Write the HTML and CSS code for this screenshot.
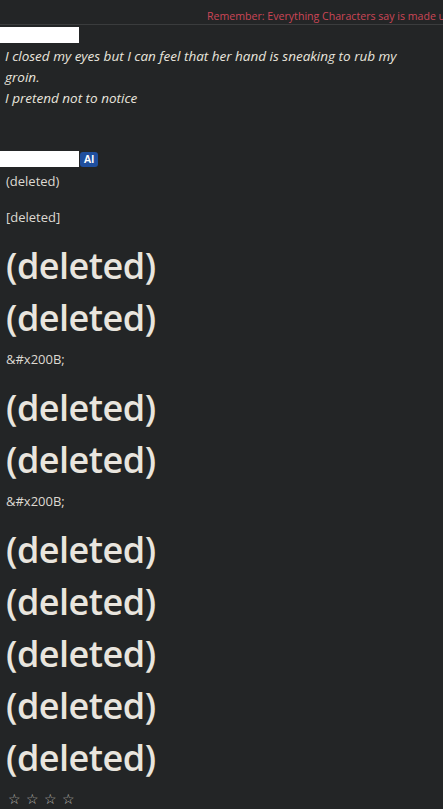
FILE: index.html
```html
<!DOCTYPE html>
<html>
<head>
<meta charset="utf-8">
<link rel="stylesheet" href="styles.css">
</head>
<body>
<div class="page">
  <header class="topbar">
    <div class="title">Play as my_companion</div>
    <div class="notice">Remember: Everything Characters say is made up!</div>
  </header>
  <div class="msg">
    <div class="name-row"><span class="name-box"></span></div>
    <div class="user-text">
      <p>I closed my eyes but I can feel that her hand is sneaking to rub my groin.</p>
      <p>I pretend not to notice</p>
    </div>
  </div>
  <div class="msg ai">
    <div class="name-row"><span class="name-box"></span><span class="badge">AI</span></div>
    <p class="small first">(deleted)</p>
    <p class="small">[deleted]</p>
    <h1 class="big">(deleted)</h1>
    <h1 class="big">(deleted)</h1>
    <p class="small zw">&amp;#x200B;</p>
    <h1 class="big">(deleted)</h1>
    <h1 class="big">(deleted)</h1>
    <p class="small zw">&amp;#x200B;</p>
    <h1 class="big">(deleted)</h1>
    <h1 class="big">(deleted)</h1>
    <h1 class="big">(deleted)</h1>
    <h1 class="big">(deleted)</h1>
    <h1 class="big">(deleted)</h1>
    <div class="stars">☆ ☆ ☆ ☆</div>
  </div>
</div>
</body>
</html>
```
FILE: styles.css
```css
html, body {
  margin: 0;
  padding: 0;
  background: #232526;
}
body {
  font-family: "Open Sans", "Noto Sans", sans-serif;
  color: #e9e5de;
  width: 443px;
  height: 809px;
  overflow: hidden;
}
.page {
  display: flex;
  flex-direction: column;
}
.topbar {
  height: 24px;
  border-bottom: 1px solid #3a3c3d;
  overflow: hidden;
  display: flex;
  flex-direction: column;
}
.title {
  margin-top: -19px;
  margin-left: 8px;
  height: 18px;
  font-size: 15px;
  line-height: 18px;
  color: #9a9a9a;
  white-space: nowrap;
}
.notice {
  padding-left: 207px;
  font-size: 10.6px;
  line-height: 14px;
  color: #cc4657;
  white-space: nowrap;
  margin-top: 10px;
}
.msg {
  display: flex;
  flex-direction: column;
}
.name-row {
  display: flex;
  align-items: center;
  gap: 1px;
  margin-top: 2px;
}
.name-box {
  width: 79px;
  height: 16px;
  background: #ffffff;
}
.badge {
  width: 18px;
  height: 15px;
  background: #1f4f9e;
  border-radius: 3px;
  color: #ffffff;
  font-family: "Liberation Sans", Arial, sans-serif;
  font-weight: 700;
  font-size: 10.5px;
  line-height: 15px;
  text-align: center;
}
.user-text {
  padding: 3px 20px 0 5px;
  font-style: italic;
  font-size: 13.5px;
  line-height: 21px;
}
.user-text p {
  margin: 0;
}
.ai {
  margin-top: 40px;
}
.small {
  margin: 0;
  padding-left: 6px;
  font-size: 13px;
  line-height: 18px;
  color: #ddd9d2;
}
.small.first {
  margin-top: 5px;
  margin-bottom: 18px;
}
.small.zw {
  margin-top: 6px;
  margin-bottom: 14px;
}
.big {
  margin: 0;
  padding-left: 6px;
  font-size: 36px;
  font-weight: 600;
  line-height: 52px;
  letter-spacing: -0.5px;
}
.small + .big {
  margin-top: 14px;
}
.small.zw + .big {
  margin-top: 0;
}
.stars {
  padding-left: 8px;
  font-family: "DejaVu Sans", sans-serif;
  font-size: 14px;
  line-height: 30px;
  color: #bdbbb7;
  letter-spacing: 0.5px;
}
```
